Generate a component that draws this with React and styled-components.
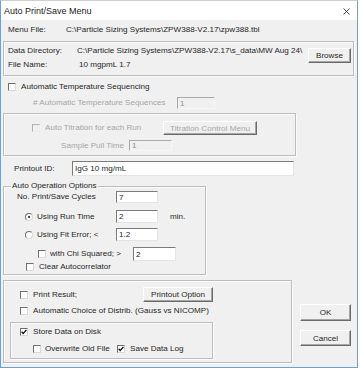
import React from 'react';
import styled, { createGlobalStyle } from 'styled-components';

const Global = createGlobalStyle`
  html, body { margin: 0; padding: 0; background: #ffffff; }
  body { font-family: "Liberation Sans", Arial, sans-serif; }
  *, *::before, *::after { box-sizing: border-box; }
`;

const Window = styled.div`
  width: 358px;
  height: 368px;
  border: 1px solid #6f9fd5;
  border-top-color: #cfcfcf;
  background: #f0f0f0;
  display: flex;
  flex-direction: column;
  font-family: "Liberation Sans", Arial, sans-serif;
  font-size: 8.1px;
  color: #262626;
`;

const TitleBar = styled.div`
  height: 19px;
  flex: none;
  background: #ffffff;
  display: flex;
  align-items: center;
  justify-content: space-between;
  padding: 1px 7px 0 3px;
  font-size: 9px;
  color: #1a1a1a;
`;

const Body = styled.div`
  flex: 1;
  display: flex;
  flex-direction: column;
  align-items: flex-start;
  padding: 0 0 0 2px;
`;

const Row = styled.div`
  display: flex;
  align-items: center;
  flex: none;
  height: ${p => p.$h}px;
  margin-top: ${p => p.$mt || 0}px;
`;

const Column = styled.div`
  display: flex;
  flex-direction: column;
  margin-top: ${p => p.$mt || 0}px;
  margin-left: ${p => p.$ml || 0}px;
`;

const Group = styled.div`
  display: flex;
  flex-direction: ${p => p.$dir || 'column'};
  align-items: flex-start;
  flex: none;
  width: ${p => p.$w}px;
  height: ${p => p.$h}px;
  margin-top: ${p => p.$mt || 0}px;
  margin-left: ${p => p.$ml || 0}px;
  border: 1px solid #bdbdbd;
  box-shadow: inset 1px 1px 0 #fbfbfb, 1px 1px 0 #fbfbfb;
`;

const Legend = styled.span`
  height: 10px;
  line-height: 10px;
  margin: -6px 0 0 7px;
  padding: 0 1px;
  background: #f0f0f0;
  white-space: nowrap;
`;

const Label = styled.span`
  flex: none;
  white-space: nowrap;
  line-height: 10px;
  margin-left: ${p => p.$ml || 0}px;
  width: ${p => (p.$w ? `${p.$w}px` : 'auto')};
  color: ${p => (p.$disabled ? '#a6a6a6' : '#262626')};
`;

const Field = styled.div`
  flex: none;
  display: flex;
  align-items: center;
  width: ${p => p.$w}px;
  height: ${p => p.$h}px;
  padding-left: 2px;
  background: ${p => (p.$disabled ? '#f0f0f0' : '#ffffff')};
  color: ${p => (p.$disabled ? '#8f8f8f' : '#262626')};
  border: 1px solid;
  border-color: ${p =>
    p.$disabled ? '#a9a9a9 #f7f7f7 #f7f7f7 #a9a9a9' : '#7b7b7b #e4e4e4 #e4e4e4 #7b7b7b'};
  white-space: nowrap;
  overflow: hidden;
`;

const Button = styled.div`
  flex: none;
  display: flex;
  align-items: center;
  justify-content: center;
  width: ${p => p.$w}px;
  height: ${p => p.$h}px;
  margin-top: ${p => p.$mt || 0}px;
  margin-left: ${p => (p.$pushRight ? 'auto' : `${p.$ml || 0}px`)};
  margin-right: ${p => p.$mr || 0}px;
  background: #f0f0f0;
  border: 1px solid;
  border-color: #ffffff #6a6a6a #6a6a6a #ffffff;
  box-shadow: inset -1px -1px 0 #a6a6a6;
  color: ${p => (p.$disabled ? '#a6a6a6' : '#262626')};
  white-space: nowrap;
`;

const Box = styled.span`
  flex: none;
  display: flex;
  align-items: center;
  justify-content: center;
  width: 8px;
  height: 8px;
  margin-left: ${p => p.$ml || 0}px;
  background: ${p => (p.$disabled ? '#f0f0f0' : '#ffffff')};
  border: 1px solid;
  border-color: ${p =>
    p.$disabled ? '#b0b0b0 #ececec #ececec #b0b0b0' : '#6f6f6f #d9d9d9 #d9d9d9 #6f6f6f'};
`;

const RadioCircle = styled.span`
  flex: none;
  display: flex;
  align-items: center;
  justify-content: center;
  width: 8px;
  height: 8px;
  margin-left: ${p => p.$ml || 0}px;
  border-radius: 50%;
  background: #ffffff;
  border: 1px solid;
  border-color: #707070 #d9d9d9 #d9d9d9 #707070;
`;

const Dot = styled.span`
  width: 2px;
  height: 2px;
  border-radius: 50%;
  background: #111;
`;

const ButtonColumn = styled.div`
  display: flex;
  flex-direction: column;
  margin-left: 8px;
`;

const BottomArea = styled.div`
  display: flex;
  align-items: flex-start;
  margin-top: 5px;
`;

const Check = ({ checked, disabled, ml }) => (
  <Box $ml={ml} $disabled={disabled}>
    {checked && (
      <svg width="6" height="6" viewBox="0 0 6 6">
        <path d="M0.6 2.8 L2.2 4.5 L5.4 0.9" fill="none" stroke="#111" strokeWidth="1.3" />
      </svg>
    )}
  </Box>
);

const Radio = ({ checked, ml }) => (
  <RadioCircle $ml={ml}>{checked && <Dot />}</RadioCircle>
);

const CloseIcon = () => (
  <svg width="7" height="7" viewBox="0 0 7 7">
    <path d="M0.5 0.5 L6.5 6.5 M6.5 0.5 L0.5 6.5" stroke="#333" strokeWidth="0.9" />
  </svg>
);

export default function App() {
  return (
    <>
      <Global />
      <Window>
        <TitleBar>
          <span>Auto Print/Save Menu</span>
          <CloseIcon />
        </TitleBar>
        <Body>
          <Row $mt={3} $h={14}>
            <Label $ml={5} $w={58}>Menu File:</Label>
            <Label>C:\Particle Sizing Systems\ZPW388-V2.17\zpw388.tbl</Label>
          </Row>

          <Group $dir="row" $w={351} $h={35} $mt={4}>
            <Column $mt={2}>
              <Row $h={14}>
                <Label $ml={4} $w={69}>Data Directory:</Label>
                <Label>C:\Particle Sizing Systems\ZPW388-V2.17\s_data\MW Aug 24\</Label>
              </Row>
              <Row $h={14}>
                <Label $ml={4} $w={71}>File Name:</Label>
                <Label>10 mgpmL 1.7</Label>
              </Row>
            </Column>
            <Button $w={43} $h={15} $mt={6} $mr={2} $pushRight>
              Browse
            </Button>
          </Group>

          <Row $mt={4} $h={14}>
            <Check ml={5} />
            <Label $ml={5}>Automatic Temperature Sequencing</Label>
          </Row>

          <Row $mt={3} $h={12}>
            <Label $ml={30} $w={144} $disabled>
              # Automatic Temperature Sequences
            </Label>
            <Field $w={38} $h={12} $disabled>1</Field>
          </Row>

          <Group $w={293} $h={43} $mt={4}>
            <Row $mt={7} $h={14}>
              <Check ml={28} disabled />
              <Label $ml={5} $w={118} $disabled>Auto Titration for each Run</Label>
              <Button $w={94} $h={14} $disabled>Titration Control Menu</Button>
            </Row>
            <Row $mt={5} $h={11}>
              <Label $ml={57} $w={68} $disabled>Sample Pull Time</Label>
              <Field $w={43} $h={11} $disabled>1</Field>
            </Row>
          </Group>

          <Row $mt={5} $h={15}>
            <Label $ml={11} $w={58}>Printout ID:</Label>
            <Field $w={222} $h={15}>IgG 10 mg/mL</Field>
          </Row>

          <Group $w={203} $h={89} $mt={10}>
            <Legend>Auto Operation Options</Legend>
            <Row $h={12}>
              <Label $ml={13} $w={99}>No. Print/Save Cycles</Label>
              <Field $w={42} $h={12}>7</Field>
            </Row>
            <Row $mt={7} $h={13}>
              <Radio ml={21} checked />
              <Label $ml={4} $w={79}>Using Run Time</Label>
              <Field $w={42} $h={13}>2</Field>
              <Label $ml={12}>min.</Label>
            </Row>
            <Row $mt={5} $h={13}>
              <Radio ml={21} />
              <Label $ml={4} $w={79}>Using Fit Error; &lt;</Label>
              <Field $w={42} $h={13}>1.2</Field>
            </Row>
            <Row $mt={6} $h={14}>
              <Check ml={34} />
              <Label $ml={4} $w={83}>with Chi Squared; &gt;</Label>
              <Field $w={43} $h={14}>2</Field>
            </Row>
            <Row $h={12}>
              <Check ml={22} />
              <Label $ml={5}>Clear Autocorrelator</Label>
            </Row>
          </Group>

          <BottomArea>
            <Group $w={289} $h={83}>
              <Row $mt={6} $h={15}>
                <Check ml={16} />
                <Label $ml={5} $w={110}>Print Result;</Label>
                <Button $w={70} $h={15}>Printout Option</Button>
              </Row>
              <Row $mt={3} $h={12}>
                <Check ml={16} />
                <Label $ml={5}>Automatic Choice of Distrib. (Gauss vs NICOMP)</Label>
              </Row>
              <Group $w={203} $h={37} $mt={5} $ml={6}>
                <Row $mt={3} $h={12}>
                  <Check ml={9} checked />
                  <Label $ml={5}>Store Data on Disk</Label>
                </Row>
                <Row $mt={5} $h={12}>
                  <Check ml={22} />
                  <Label $ml={4} $w={72}>Overwrite Old File</Label>
                  <Check checked />
                  <Label $ml={5}>Save Data Log</Label>
                </Row>
              </Group>
            </Group>
            <ButtonColumn>
              <Button $w={51} $h={17} $mt={24}>OK</Button>
              <Button $w={51} $h={16} $mt={9}>Cancel</Button>
            </ButtonColumn>
          </BottomArea>
        </Body>
      </Window>
    </>
  );
}
